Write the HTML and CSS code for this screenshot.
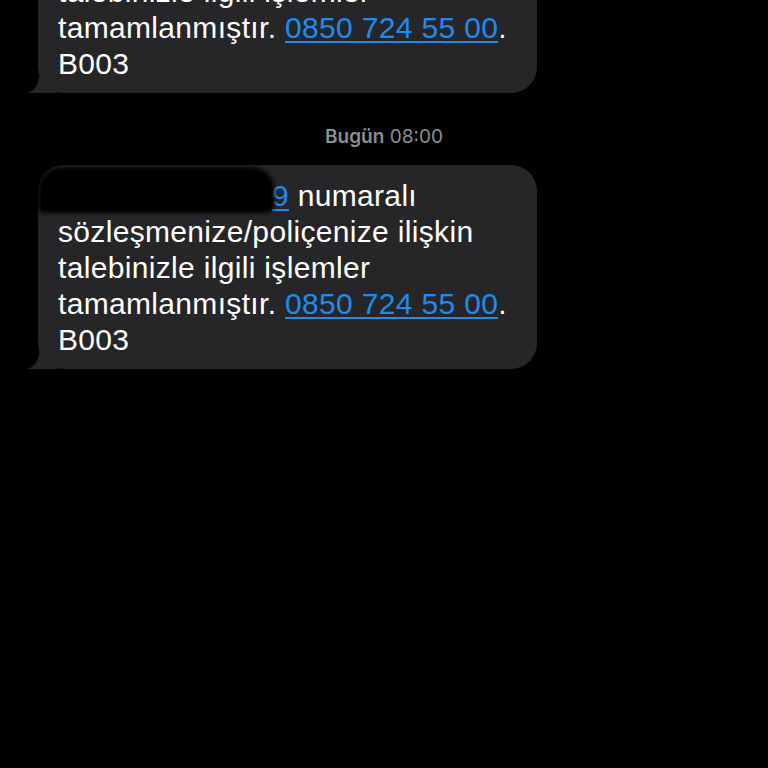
FILE: index.html
```html
<!DOCTYPE html>
<html lang="tr">
<head>
<meta charset="utf-8">
<link rel="stylesheet" href="styles.css">
</head>
<body>
<div class="thread">
  <div class="msg msg-first">
    <div class="bubble">
      <span class="redact"></span><a class="link" href="#"><span class="hidden"></span>9</a> numaralı sözleşmenize/poliçenize ilişkin talebinizle ilgili işlemler tamamlanmıştır. <a class="link" href="#">0850 724 55 00</a>. B003
      <span class="tail"></span>
    </div>
  </div>
  <div class="stamp"><span class="day">Bugün</span> 08:00</div>
  <div class="msg">
    <div class="bubble">
      <span class="redact"></span><a class="link" href="#"><span class="hidden"></span>9</a> numaralı sözleşmenize/poliçenize ilişkin talebinizle ilgili işlemler tamamlanmıştır. <a class="link" href="#">0850 724 55 00</a>. B003
      <span class="tail"></span>
    </div>
  </div>
</div>
</body>
</html>
```
FILE: styles.css
```css
html, body {
  margin: 0;
  padding: 0;
  background: #000;
  height: 100%;
  overflow: hidden;
}
.thread {
  display: flex;
  flex-direction: column;
  font-family: "Liberation Sans", Arial, sans-serif;
}
.msg {
  padding-left: 38px;
}
.msg-first {
  margin-top: -111px;
}
.bubble {
  position: relative;
  z-index: 0;
  width: 459px;
  padding: 13px 20px 11px 20px;
  background: #262628;
  border-radius: 26px;
  color: #fff;
  font-size: 30px;
  letter-spacing: 0.33px;
  line-height: 36px;
}
.link {
  color: #1c8cf0;
  text-decoration: underline;
  text-decoration-thickness: 2px;
  text-underline-offset: 3px;
}
.hidden {
  display: inline-block;
  width: 214px;
}
.redact {
  position: absolute;
  left: 0;
  top: 2px;
  width: 236px;
  height: 46px;
  background: #000;
  border-radius: 24px 22px 8px 6px;
  filter: blur(2px);
  z-index: 2;
}
.tail {
  position: absolute;
  left: -11px;
  bottom: 0;
  width: 30px;
  height: 22px;
  background: #262628;
  clip-path: path("M0 22 C 8 20 12 14 13 0 L 30 0 L 30 22 Z");
  z-index: -1;
}
.stamp {
  padding: 34px 0 18px;
  line-height: 20px;
  text-align: center;
  color: #8e8e93;
  font-family: Inter, "Liberation Sans", sans-serif;
  font-size: 19px;
}
.day {
  font-weight: 600;
}
```
